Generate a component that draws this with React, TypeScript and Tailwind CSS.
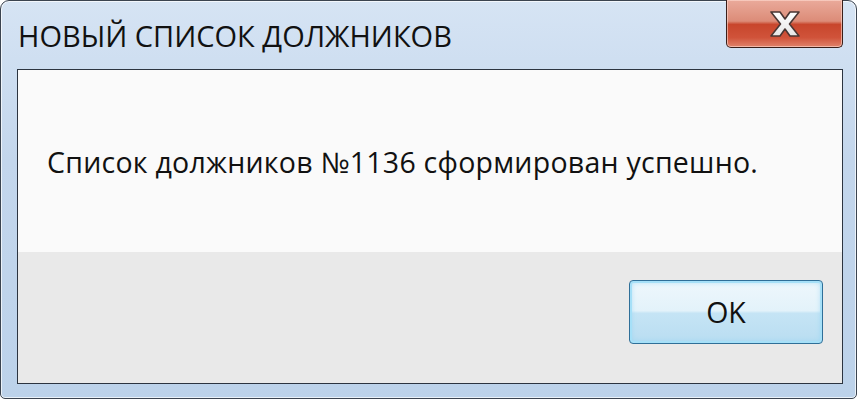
import React from "react";

export default function App() {
  return (
    <div className="w-[860px] h-[400px] bg-white relative overflow-hidden" style={{ fontFamily: '"Open Sans", "Noto Sans", sans-serif' }}>
      <div className="w-[857px] h-[399px] rounded-t-[9px] rounded-b-[5px] border border-[#3b4450] bg-[linear-gradient(180deg,#d6e4f4_0%,#c3d6ec_40%,#bcd2ea_100%)] shadow-[inset_0_0_0_1px_rgba(255,255,255,0.7)] flex flex-col pl-[16px] pr-[13px] pb-[14px]">
        <div className="h-[68px] flex items-start shrink-0">
          <div className="pt-[20px] text-[29px] leading-none text-[#111] pl-[1px]">НОВЫЙ СПИСОК ДОЛЖНИКОВ</div>
          <div className="ml-auto w-[117px] h-[48px] -mt-[1px] rounded-b-[5px] border border-[#3a1f1a] border-t-0 bg-[linear-gradient(180deg,#eaaa9b_0%,#dc8c78_45%,#c8462c_52%,#d0533a_80%,#e0836b_100%)] shadow-[inset_0_0_0_1px_rgba(255,220,210,0.6)] flex items-center justify-center">
            <svg width="32" height="28" viewBox="0 0 32 28" className="mt-[1px] ml-[1px]">
              <defs>
                <linearGradient id="xg" x1="0" y1="0" x2="0" y2="1">
                  <stop offset="0" stopColor="#ffffff" />
                  <stop offset="1" stopColor="#e6e6e6" />
                </linearGradient>
              </defs>
              <path d="M2 2 H11 L16 9 L21 2 H30 L20.5 14 L30 26 H21 L16 19 L11 26 H2 L11.5 14 Z" fill="url(#xg)" stroke="#4a3633" strokeWidth="1.6" strokeLinejoin="round" />
            </svg>
          </div>
        </div>
        <div className="flex-1 border border-[#2c3440] flex flex-col overflow-hidden">
          <div className="h-[182px] bg-[#fafafa] shrink-0 pl-[29px] pt-[78px]">
            <div className="text-[28.5px] leading-none tracking-[0.25px] text-[#111]">Список должников №1136 сформирован успешно.</div>
          </div>
          <div className="flex-1 bg-[#e9e9e9] flex items-start justify-end pr-[19px] pt-[28px]">
            <button className="w-[194px] h-[64px] rounded-[4px] border border-[#2f6f98] bg-[linear-gradient(180deg,#eef7fc_0%,#e3f2fa_48%,#c5e4f5_52%,#b9ddf1_100%)] shadow-[inset_0_0_0_2px_#a6e0f8,inset_0_0_6px_#8fd3f2] text-[28.5px] leading-none text-[#111] flex items-center justify-center">
              OK
            </button>
          </div>
        </div>
      </div>
    </div>
  );
}
